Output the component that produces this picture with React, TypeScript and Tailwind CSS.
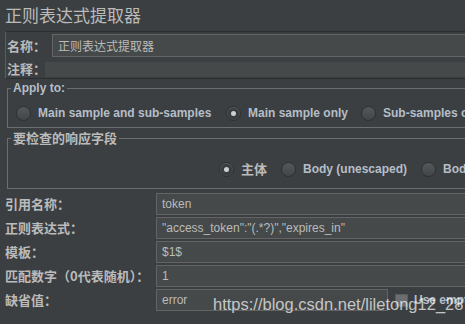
import React from "react";

const cjk = "font-['Noto_Sans_CJK_SC','Noto_Sans',sans-serif]";
const latin = "font-['Liberation_Sans','Noto_Sans_CJK_SC',sans-serif]";

function Radio({ checked }: { checked?: boolean }) {
  return (
    <span className="flex h-[15px] w-[15px] shrink-0 items-center justify-center rounded-full border border-[#2e3031] bg-[linear-gradient(#55585a,#434648)]">
      {checked && <span className="h-[5px] w-[5px] rounded-full bg-[#cfcfcf] shadow-[0_0_0_3px_#3a3d3f]" />}
    </span>
  );
}

function Option({ label, checked, width, cn }: { label: string; checked?: boolean; width?: string; cn?: boolean }) {
  return (
    <div className={`flex h-[16px] shrink-0 items-center gap-[7px] ${width ?? ""}`}>
      <Radio checked={checked} />
      <span
        className={`whitespace-nowrap leading-[16px] ${cn ? `${cjk} text-[13px] text-[#bbbbbb]` : `${latin} text-[12px] text-[#b5bec8]`} font-bold`}
      >
        {label}
      </span>
    </div>
  );
}

const rows = [
  { label: "引用名称：", value: "token" },
  { label: "正则表达式：", value: "\"access_token\":\"(.*?)\",\"expires_in\"" },
  { label: "模板：", value: "$1$" },
  { label: "匹配数字（0代表随机）：", value: "1" },
];

export default function App() {
  return (
    <div className="relative h-[324px] w-[465px] overflow-hidden bg-[#3c3f41] text-[#bbbbbb]">
      {/* title */}
      <div className={`${cjk} h-[31px] pl-[5px] pt-[3px] text-[17px] leading-[24px] text-[#bbbbbb]`}>
        正则表达式提取器
      </div>

      {/* name / comment panel */}
      <div className="ml-[5px] h-[48px] border border-r-0 border-[#2b2d2e] border-l-[#5b5e60]">
        <div className="flex items-center pt-[2px]">
          <span className={`${cjk} w-[46px] shrink-0 whitespace-nowrap pl-[1px] text-[13px] font-bold leading-[16px]`}>名称：</span>
          <div className={`${cjk} flex h-[23px] flex-1 items-center border border-r-0 border-[#646464] bg-[#45494a] pl-[5px] text-[12px]`}>
            正则表达式提取器
          </div>
        </div>
        <div className="mt-[4px] flex items-center">
          <span className={`${cjk} w-[39px] shrink-0 overflow-visible whitespace-nowrap pl-[1px] text-[13px] font-bold leading-[16px]`}>注释：</span>
          <div className="h-[15px] flex-1 bg-[#45494a]" />
        </div>
      </div>

      {/* apply to */}
      <fieldset className="ml-[7px] mt-[2px] border border-r-0 border-[#6c6f71] pb-[6px]">
        <legend className={`${latin} ml-[3px] px-[2px] text-[12px] font-bold leading-[14px] text-[#b5bec8]`}>
          Apply to:
        </legend>
        <div className="flex items-center pl-[8px] pt-[10px]">
          <Option label="Main sample and sub-samples" width="w-[210px]" />
          <Option label="Main sample only" checked width="w-[135px]" />
          <Option label="Sub-samples only" />
        </div>
      </fieldset>

      {/* response field */}
      <fieldset className="ml-[7px] mt-[3px] border border-r-0 border-[#6c6f71] pb-[11px]">
        <legend className={`${cjk} ml-[3px] px-[2px] text-[13px] font-bold leading-[14px] text-[#bbbbbb]`}>
          要检查的响应字段
        </legend>
        <div className="flex items-center pl-[211px] pt-[16px]">
          <Option label="主体" checked cn width="w-[62px]" />
          <Option label="Body (unescaped)" width="w-[140px]" />
          <Option label="Body as a Document" />
        </div>
      </fieldset>

      {/* extractor fields */}
      <div className="mt-[4px] flex flex-col gap-[2px]">
        {rows.map((r) => (
          <div key={r.label} className="flex h-[22px] items-center">
            <span className={`${cjk} w-[156px] shrink-0 whitespace-nowrap pl-[5px] text-[13px] font-bold leading-[16px]`}>{r.label}</span>
            <div className={`${latin} flex h-[22px] flex-1 items-center border border-r-0 border-[#646464] bg-[#45494a] pl-[5px] text-[12px]`}>
              {r.value}
            </div>
          </div>
        ))}
        <div className="flex h-[22px] items-center">
          <span className={`${cjk} w-[156px] shrink-0 whitespace-nowrap pl-[5px] text-[13px] font-bold leading-[16px]`}>缺省值：</span>
          <div className={`${latin} flex h-[22px] w-[232px] shrink-0 items-center border border-[#646464] bg-[#45494a] pl-[5px] text-[12px]`}>
            error
          </div>
          <span className="ml-[7px] h-[13px] w-[13px] shrink-0 border border-[#5a5d5f] bg-[#6b6e70]" />
          <span className={`${latin} ml-[6px] whitespace-nowrap text-[12px] font-bold text-[#b5bec8]`}>
            Use empty default value
          </span>
        </div>
      </div>

      {/* watermark */}
      <div className={`${latin} pointer-events-none absolute left-[213px] top-[294px] whitespace-nowrap text-[16.5px] leading-[20px] text-white/70`}>
        https://blog.csdn.net/liletong12_28
      </div>
    </div>
  );
}
